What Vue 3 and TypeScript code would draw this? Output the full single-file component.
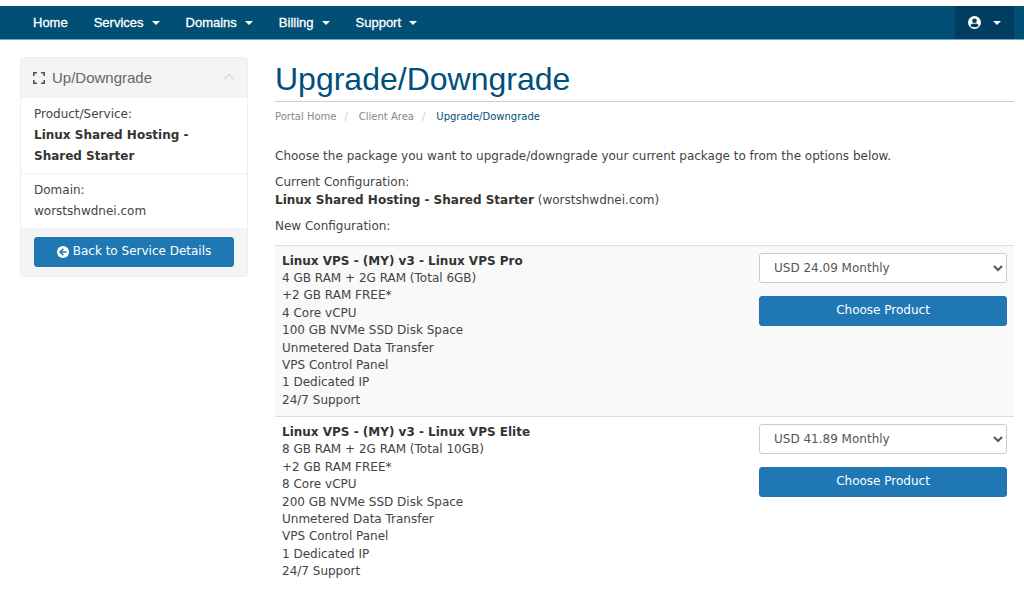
<script setup lang="ts">
import { ref } from 'vue'

interface Pack {
  id: string
  name: string
  features: string[]
  price: string
}

const menu = [
  { label: 'Home', dropdown: false },
  { label: 'Services', dropdown: true },
  { label: 'Domains', dropdown: true },
  { label: 'Billing', dropdown: true },
  { label: 'Support', dropdown: true },
]

const packs: Pack[] = [
  {
    id: 'pro',
    name: 'Linux VPS - (MY) v3 - Linux VPS Pro',
    features: [
      '4 GB RAM + 2G RAM (Total 6GB)',
      '+2 GB RAM FREE*',
      '4 Core vCPU',
      '100 GB NVMe SSD Disk Space',
      'Unmetered Data Transfer',
      'VPS Control Panel',
      '1 Dedicated IP',
      '24/7 Support',
    ],
    price: 'USD 24.09 Monthly',
  },
  {
    id: 'elite',
    name: 'Linux VPS - (MY) v3 - Linux VPS Elite',
    features: [
      '8 GB RAM + 2G RAM (Total 10GB)',
      '+2 GB RAM FREE*',
      '8 Core vCPU',
      '200 GB NVMe SSD Disk Space',
      'Unmetered Data Transfer',
      'VPS Control Panel',
      '1 Dedicated IP',
      '24/7 Support',
    ],
    price: 'USD 41.89 Monthly',
  },
]

const open = ref(true)
</script>

<template>
  <div class="page">
    <nav class="navbar" aria-label="Main">
      <ul class="menu">
        <li v-for="item in menu" :key="item.label">
          <a href="#">{{ item.label }}<span v-if="item.dropdown" class="caret"></span></a>
        </li>
      </ul>
      <button class="account" type="button" aria-label="Account">
        <svg width="13" height="13" viewBox="0 0 14 14" aria-hidden="true">
          <circle cx="7" cy="7" r="7" fill="#fff" />
          <circle cx="7" cy="5.1" r="2.5" fill="#013d60" />
          <path d="M2.7 11.1c0-2.2 1.3-3.1 2.7-3.1q1.6.7 3.2 0c1.4 0 2.7.9 2.7 3.1q-4.3 2.1-8.6 0z" fill="#013d60" />
        </svg>
        <span class="caret"></span>
      </button>
    </nav>

    <div class="layout">
      <aside class="panel">
        <header class="panel-head">
          <svg width="12" height="12" viewBox="0 0 12 12" fill="none" stroke="#555" stroke-width="1.6" aria-hidden="true">
            <path d="M.8 4V.8H4M8 .8h3.2V4M11.2 8v3.2H8M4 11.2H.8V8" />
          </svg>
          <h2>Up/Downgrade</h2>
          <button class="toggle" type="button" aria-label="Toggle panel" @click="open = !open">
            <svg width="12" height="10" viewBox="0 0 12 10" fill="none" stroke="#dadada" stroke-width="1.6" aria-hidden="true">
              <path d="M1.5 6 6 1.5 10.5 6" />
            </svg>
          </button>
        </header>
        <div v-if="open" class="panel-body">
          <p>Product/Service:<br /><strong>Linux Shared Hosting - Shared Starter</strong></p>
          <p>Domain:<br />worstshwdnei.com</p>
        </div>
        <footer class="panel-foot">
          <button class="btn" type="button">
            <svg width="12" height="12" viewBox="0 0 12 12" aria-hidden="true">
              <circle cx="6" cy="6" r="6" fill="#fff" />
              <path d="M6.4 2.7 3.1 6l3.3 3.3M3.3 6h6.2" fill="none" stroke="#1f78b4" stroke-width="1.6" />
            </svg>
            Back to Service Details
          </button>
        </footer>
      </aside>

      <main class="main">
        <h1>Upgrade/Downgrade</h1>
        <ol class="crumbs">
          <li><a href="#">Portal Home</a></li>
          <li><a href="#">Client Area</a></li>
          <li aria-current="page">Upgrade/Downgrade</li>
        </ol>
        <p>Choose the package you want to upgrade/downgrade your current package to from the options below.</p>
        <p>Current Configuration:<br /><strong>Linux Shared Hosting - Shared Starter</strong> (worstshwdnei.com)</p>
        <p>New Configuration:</p>
        <table class="packs">
          <tbody>
            <tr v-for="pack in packs" :key="pack.id">
              <td>
                <strong>{{ pack.name }}</strong>
                <ul>
                  <li v-for="feature in pack.features" :key="feature">{{ feature }}</li>
                </ul>
              </td>
              <td class="order">
                <select :aria-label="`Billing cycle for ${pack.name}`">
                  <option>{{ pack.price }}</option>
                </select>
                <button class="btn" type="button">Choose Product</button>
              </td>
            </tr>
          </tbody>
        </table>
      </main>
    </div>
  </div>
</template>

<style>
body {
  margin: 0;
  background: #fff;
}
</style>

<style scoped>
* {
  box-sizing: border-box;
}
.page {
  padding-top: 6px;
  color: #444;
  font: 12px/1.45 Verdana, "DejaVu Sans", sans-serif;
}
a {
  color: inherit;
  text-decoration: none;
}
ul,
ol {
  margin: 0;
  padding: 0;
  list-style: none;
}
strong {
  color: #333;
}
.navbar {
  display: flex;
  justify-content: space-between;
  padding: 0 10px 0 20px;
  background: #014f74;
  color: #fff;
  border-bottom: 1px solid #7fa7ba;
}
.menu {
  display: flex;
  font: 13px/33px "Liberation Sans", Arial, sans-serif;
  -webkit-text-stroke: 0.3px #fff;
}
.menu a {
  display: flex;
  align-items: center;
  padding: 0 13px;
}
.caret {
  width: 0;
  margin-left: 8px;
  border: 4px solid transparent;
  border-top: 4px solid #fff;
  border-bottom: 0;
}
.account {
  display: flex;
  align-items: center;
  gap: 4px;
  padding: 0 13px;
  border: 0;
  background: #013d60;
}
.layout {
  display: grid;
  grid-template-columns: 228px minmax(0, 1fr);
  gap: 27px;
  align-items: start;
  padding: 17px 10px 12px 20px;
}
.panel {
  border: 1px solid #efefef;
  border-radius: 4px;
  background: #f4f4f4;
}
.panel-head {
  display: flex;
  align-items: center;
  gap: 7px;
  height: 40px;
  padding: 0 12px;
}
.panel-head h2 {
  flex: 1;
  margin: 0;
  color: #666;
  font: 15px/20px "Liberation Sans", Arial, sans-serif;
}
.toggle {
  display: flex;
  padding: 0;
  border: 0;
  background: none;
}
.panel-body {
  background: #fff;
  line-height: 21px;
}
.panel-body p {
  margin: 0;
  padding: 6px 13px;
}
.panel-body p + p {
  border-top: 1px solid #f2f2f2;
}
.panel-foot {
  padding: 9px 13px;
}
.btn {
  display: flex;
  align-items: center;
  justify-content: center;
  gap: 4px;
  width: 100%;
  height: 30px;
  padding: 0;
  border: 1px solid #1f74ad;
  border-radius: 3px;
  background: #1f78b4;
  color: #fff;
  font: inherit;
}
.main h1 {
  margin: 0;
  padding: 4px 0;
  border-bottom: 1px solid #ccc;
  color: #014f7c;
  font: 32px/36px "Liberation Sans", Arial, sans-serif;
}
.crumbs {
  display: flex;
  padding: 7px 0;
  margin-bottom: 17px;
  color: #888;
  font-size: 10px;
  line-height: 15px;
}
.crumbs li + li::before {
  content: "/";
  padding: 0 11px 0 8px;
  color: #ccc;
}
.crumbs li:last-child {
  color: #014f7c;
}
.main p {
  margin: 0 0 9px;
}
.packs {
  width: 100%;
  border-collapse: collapse;
}
.packs tr {
  border-top: 1px solid #ddd;
}
.packs tr:nth-child(odd) {
  background: #f9f9f9;
}
.packs td {
  padding: 7px;
  vertical-align: top;
}
.packs .order {
  width: 262px;
}
select {
  display: block;
  width: 100%;
  height: 30px;
  margin-bottom: 13px;
  padding: 0 0 0 10px;
  border: 1px solid #ccc;
  border-radius: 3px;
  background: #fff;
  color: #555;
  font: inherit;
}
</style>
